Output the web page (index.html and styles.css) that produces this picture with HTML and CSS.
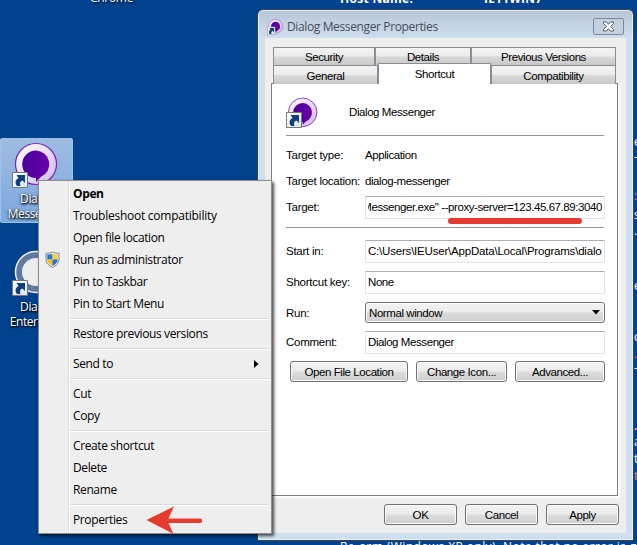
FILE: index.html
```html
<!DOCTYPE html>
<html lang="en">
<head>
<meta charset="utf-8">
<title>Dialog Messenger Properties</title>
<link rel="stylesheet" href="styles.css">
</head>
<body>
<svg width="0" height="0" class="defs" aria-hidden="true">
  <defs>
    <linearGradient id="ring" x1="0" y1="0" x2="1" y2="1"><stop offset="0" stop-color="#fff"/><stop offset="1" stop-color="#cbb9ec"/></linearGradient>
    <linearGradient id="core" x1="0" y1="0" x2="1" y2="0"><stop offset="0" stop-color="#48009a"/><stop offset="1" stop-color="#6c00a9"/></linearGradient>
    <linearGradient id="arrowbox" x1="0" y1="0" x2="1" y2="1"><stop offset="0" stop-color="#fff"/><stop offset="1" stop-color="#d3e5f3"/></linearGradient>
    <symbol id="link" viewBox="0 0 16 16">
      <path d="M.5.5h15v15H.5z" fill="url(#arrowbox)" stroke="#777"/>
      <path d="M5 14C2.500 10.500 3.500 7.500 6.500 6L4.500 3H13v8l-2.500-2.500C8 9.500 7.500 11 8.500 14z" fill="#123f7c"/>
    </symbol>
    <symbol id="messenger" viewBox="0 0 46 46">
      <circle cx="24" cy="22" r="20.500" fill="url(#ring)" stroke="#7d22b5" stroke-width="1.200"/>
      <path d="M24 8.500a13.700 13.700 0 0 1 5 26.300L24 40v-4a13.700 13.700 0 0 1 0-27.500z" fill="url(#core)"/>
    </symbol>
  </defs>
</svg>
<main class="desktop">
  <span class="wall chrome">Chrome</span>
  <b class="wall host">Host Name:</b>
  <b class="wall hostname">IE11WIN7</b>
  <span class="wall rearm">Re-arm (Windows XP only). Note that no error is given</span>
  <span class="edge e1">e</span><span class="edge e2">-</span><span class="edge e3 pink">:</span><span class="edge e4">s</span><span class="edge e5">.e</span><span class="edge e6">e</span><span class="edge e7">c</span><span class="edge e8 pink">.</span><span class="edge e9">-</span><span class="edge e10">.e</span><span class="edge e11">a</span><b class="edge e12">t</b><span class="edge e13 pink">t</span>

  <div class="shortcut selected">
    <svg class="app" viewBox="0 0 46 46"><use href="#messenger"/></svg>
    <svg class="badge"><use href="#link"/></svg>
    <span>Dialog<br>Messenger</span>
  </div>
  <div class="shortcut enterprise">
    <svg class="app" viewBox="0 0 46 46"><circle cx="24" cy="22" r="20.500" fill="#60799f" stroke="#eee" stroke-width="1.500"/><circle cx="24" cy="22" r="14" fill="#ececec"/></svg>
    <svg class="badge"><use href="#link"/></svg>
    <span>Dialog<br>Enterprise</span>
  </div>

  <section class="window">
    <header class="titlebar">
      <svg class="small" viewBox="0 0 32 32"><use href="#messenger" x="1" y="0" width="31" height="31"/><use href="#link" x="0" y="15" width="17" height="17"/></svg>
      <h1>Dialog Messenger Properties</h1>
      <div class="close"><svg width="13" height="11" viewBox="0 0 13 11"><path d="M1.500 1h3l2 2.300L8.500 1h3v1.500l-3 3 3 3V10h-3l-2-2.300L4.500 10h-3V8.500l3-3-3-3z" fill="#fff" stroke="#555d68"/></svg></div>
    </header>
    <div class="client">
      <div class="tabs upper"><span>Security</span><span>Details</span><span>Previous Versions</span></div>
      <div class="tabs lower"><span>General</span><span class="active">Shortcut</span><span>Compatibility</span></div>
      <div class="page">
        <div class="identity"><svg width="33" height="32" viewBox="0 0 33 32"><use href="#messenger" x="0" y="0" width="32" height="32"/><use href="#link" x="0" y="15" width="16" height="16"/></svg><span>Dialog Messenger</span></div>
        <div class="rule"></div>
        <div class="row type"><label>Target type:</label><span>Application</span></div>
        <div class="row location"><label>Target location:</label><span>dialog-messenger</span></div>
        <div class="row target"><label>Target:</label><div class="field end"><span>Messenger.exe" --proxy-server=123.45.67.89:3040</span></div><i class="mark"></i></div>
        <div class="rule second"></div>
        <div class="row start"><label>Start in:</label><div class="field"><span class="path">C:\Users\IEUser\AppData\Local\Programs\dialog</span></div></div>
        <div class="row key"><label>Shortcut key:</label><div class="field"><span>None</span></div></div>
        <div class="row run"><label>Run:</label><div class="select button"><span>Normal window</span><svg width="8" height="5"><path d="M0 0h8L4 4.500z"/></svg></div></div>
        <div class="row comment"><label>Comment:</label><div class="field"><span>Dialog Messenger</span></div></div>
        <div class="actions"><div class="button open">Open File Location</div><div class="button icon">Change Icon...</div><div class="button advanced">Advanced...</div></div>
      </div>
      <footer><div class="button">OK</div><div class="button">Cancel</div><div class="button">Apply</div></footer>
    </div>
  </section>

  <nav class="menu">
    <div class="item"><b>Open</b></div>
    <div class="item wide">Troubleshoot compatibility</div>
    <div class="item">Open file location</div>
    <div class="item"><svg class="shield" width="15" height="17" viewBox="0 0 15 17"><path d="M7.500.8C5.500 2.200 3.500 2.300 1 2.200V8c0 4.500 3 6.800 6.500 8.300C11 14.800 14 12.500 14 8V2.200C11.500 2.300 9.500 2.200 7.500.8z" fill="#e8e8e8" stroke="#7e8790"/><path d="M7.500 2.700v5.800H2.300V3.600c2 0 3.700-.1 5.200-.9z" fill="#2074cf"/><path d="M7.500 2.700v5.800h5.200V3.600c-2 0-3.700-.1-5.200-.9z" fill="#f9cf2b"/><path d="M2.300 8.500h5.200v6.300C4.500 13.500 2.300 11.500 2.300 8.500z" fill="#f3bd18"/><path d="M12.700 8.500H7.500v6.300c3-1.300 5.200-3.300 5.200-6.300z" fill="#2074cf"/></svg>Run as administrator</div>
    <div class="item">Pin to Taskbar</div>
    <div class="item">Pin to Start Menu</div>
    <hr>
    <div class="item">Restore previous versions</div>
    <hr>
    <div class="item">Send to<svg class="more" width="5" height="8"><path d="M0 0l4.500 4L0 8z"/></svg></div>
    <hr>
    <div class="item">Cut</div>
    <div class="item">Copy</div>
    <hr>
    <div class="item">Create shortcut</div>
    <div class="item">Delete</div>
    <div class="item">Rename</div>
    <hr>
    <div class="item">Properties<svg class="pointer" width="58" height="29" viewBox="0 0 58 29"><path d="M.5 14L28 .5 22.500 12.500H54a2 2 0 0 1 0 4.500H22.500L27.500 28z" fill="#e63c30"/></svg></div>
  </nav>
</main>
</body>
</html>
```

FILE: styles.css
```css
* { box-sizing: border-box; }
body { margin: 0; }
.defs { position: absolute; }
.desktop {
  position: relative; width: 637px; height: 545px; overflow: hidden;
  background: #00428e; color: #000;
  font: 11.5px/14px "Liberation Sans", sans-serif;
  letter-spacing: -.42px;
  white-space: nowrap;
}
.wall, .edge { position: absolute; color: #fff; font: 12px/16px "Open Sans", sans-serif; letter-spacing: 0; }
.chrome { left: 90px; top: -10px; letter-spacing: -.3px; text-shadow: 1px 1px 2px #000; }
.host { left: 340px; top: -9px; font-weight: 700; letter-spacing: .3px; }
.hostname { left: 484px; top: -9px; font-weight: 700; letter-spacing: .2px; }
.rearm { left: 340px; top: 539px; letter-spacing: .42px; }
.edge { left: 634px; }
.pink { color: #d38c9d; }
.e1 { top: 134px; } .e2 { top: 149px; } .e3 { top: 188px; } .e4 { top: 207px; }
.e5 { top: 223px; } .e6 { top: 278px; } .e7 { top: 329px; } .e8 { top: 346px; }
.e9 { top: 360px; } .e10 { top: 418px; } .e11 { top: 434px; } .e12 { top: 451px; } .e13 { top: 468px; }

.shortcut {
  position: absolute; left: 0; top: 138px; width: 73px; height: 85px;
  padding-top: 52px; border: 1px solid transparent; border-radius: 2px;
  color: #fff; text-align: center; font: 12px/15px "Open Sans", sans-serif;
  letter-spacing: -.4px; text-shadow: 1px 1px 2px #000, 0 1px 3px #000;
}
.selected { background: linear-gradient(#9ebce1, #7da8df); border-color: #9dc3ec; }
.enterprise { top: 246px; }
.shortcut .app { position: absolute; left: 11px; top: 3px; width: 46px; height: 46px; }
.shortcut .badge { position: absolute; left: 11px; top: 33px; width: 16px; height: 16px; }

.window {
  position: absolute; left: 257px; top: 9px; width: 377px; height: 532px;
  border: 1px solid #3d434b; border-radius: 6px 6px 0 0; padding: 0 7px 7px;
  background: linear-gradient(#b4c5d8, #c0cfdf 10px, #d0dff0 29px);
  box-shadow: inset 0 0 0 1px #e2edf7;
}
.titlebar { display: flex; height: 28px; align-items: flex-start; }
.small { width: 16px; height: 16px; margin: 9px 4px 0 2px; }
h1 { margin: 8px 0 0; font: 12px/17px "Open Sans", sans-serif; color: #454d57; letter-spacing: -.37px; }
.close {
  display: flex; align-items: center; justify-content: center;
  width: 31px; height: 17px; margin: 8px 2px 0 auto;
  border: 1px solid #7d899b; border-radius: 2px; background: #c2d0df;
}
.client { height: 495px; padding: 9px 7px 0 6px; background: #eee; }
.tabs { display: grid; height: 18px; margin: 0 2px; }
.upper { grid-template-columns: 102px 96px 145px; }
.lower { grid-template-columns: 105px 113px 125px; }
.tabs span {
  display: flex; align-items: center; justify-content: center; padding-top: 1px;
  border: 1px solid #898c95; border-bottom: 0;
  background: linear-gradient(#f3f3f3 0, #ebebeb 48%, #d9d9d9 52%, #c8c8c8);
}
.tabs .active { height: 21px; margin-top: -2px; padding-bottom: 2px; background: #fff; z-index: 1; }
.page {
  height: 413px; width: 347px; padding: 13px 12px 0 14px;
  border: 1px solid #7e7e87; background: #fff; box-shadow: 2px 2px #fff;
}
.identity { display: flex; align-items: center; height: 32px; }
.identity span { margin: -2px 0 0 30px; }
.rule { width: 318px; height: 1px; margin-top: 6px; background: #949494; }
.row { display: flex; position: relative; align-items: center; width: 319px; }
.row label { width: 79px; flex: none; letter-spacing: -.25px; }
.type { height: 14px; margin-top: 12px; }
.location { height: 14px; margin-top: 12px; }
.target { margin-top: 8px; }
.field {
  display: flex; align-items: center; width: 240px; height: 23px; padding: 0 2px;
  border: 1px solid #dfe3ea; border-top-color: #aaadb5; border-radius: 1px; background: #fff;
}
.field span { flex: 1; overflow: hidden; padding-bottom: 1px; }
.target label, .start label, .key label, .comment label { padding-bottom: 2px; }
.end span { display: flex; justify-content: flex-end; padding-bottom: 2px; }
.field .path { letter-spacing: -.2px; }
.mark { position: absolute; left: 162px; top: 22px; width: 134px; height: 6px; border-radius: 3px; background: #e43c32; }
.second { margin-top: 8px; }
.start { margin-top: 12px; }
.key { margin-top: 8px; }
.run { margin-top: 8px; }
.comment { margin-top: 8px; }
.button {
  display: flex; align-items: center; justify-content: center; height: 21px; padding-top: 1px;
  border: 1px solid #707070; border-radius: 3px; box-shadow: inset 0 0 0 1px #fafafa;
  background: linear-gradient(#f3f3f3, #ebebeb 48%, #dcdcdc 52%, #cecece);
}
.select { width: 240px; justify-content: space-between; padding: 0 4px 0 3px; }
.actions { display: flex; gap: 8px; margin: 7px 0 0 4px; }
.actions .open { width: 118px; }
.actions .icon { width: 91px; }
.actions .advanced { width: 90px; }
footer { display: flex; justify-content: flex-end; gap: 8px; margin: 8px 0 0; }
footer .button { width: 73px; }

.menu {
  position: absolute; left: 38px; top: 180px; width: 234px; height: 354px; padding: 2px;
  border: 1px solid #8d8d8d;
  background: linear-gradient(90deg, #eee 29px, #dcdcdc 29px, #dcdcdc 30px, #fff 30px, #fff 31px, #eee 31px);
  box-shadow: 2px 2px 3px rgba(0, 0, 0, .7);
  font: 12px/22px "Open Sans", sans-serif; letter-spacing: -.38px;
}
.item { position: relative; height: 22px; padding-left: 32px; }
.wide { letter-spacing: -.25px; }
hr { height: 2px; margin: 3px 0 3px 29px; border: 0; background: linear-gradient(#d8d8d8 50%, #fff 50%); }
.shield { position: absolute; left: 4px; top: 2px; }
.more { position: absolute; right: 10px; top: 7px; }
.pointer { position: absolute; left: 105px; top: -3px; }
```
